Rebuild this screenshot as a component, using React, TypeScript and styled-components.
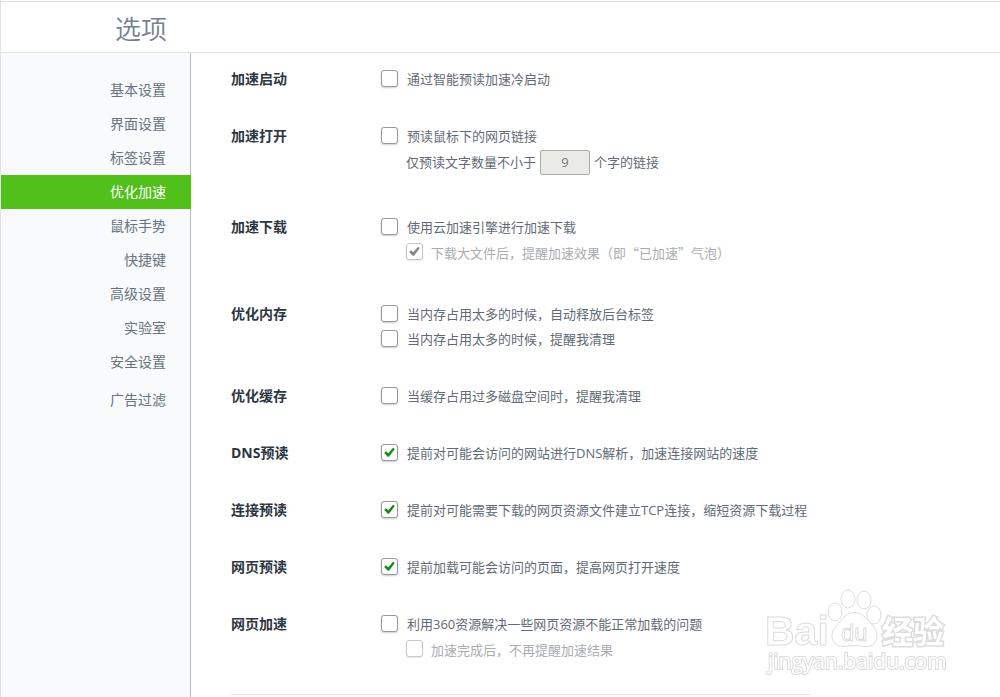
import React from "react";
import styled, { createGlobalStyle, css } from "styled-components";

const GlobalStyle = createGlobalStyle`
  *, *::before, *::after { box-sizing: border-box; }
  body {
    margin: 0;
    background: #fff;
    color: #5f6b76;
    font: 13px/25px "Open Sans", "Noto Sans CJK SC", sans-serif;
  }
`;

const Page = styled.div`
  display: flex;
  flex-direction: column;
  min-height: 100vh;
  padding-top: 1px;
  border-left: 1px solid #e0e3e6;
`;

const Header = styled.header`
  height: 52px;
  padding-left: 114px;
  border-top: 1px solid #dcdfe2;
  border-bottom: 1px solid #e2e4e7;
`;

const Title = styled.h1`
  margin: 0;
  font-family: "Noto Sans CJK SC", sans-serif;
  font-size: 26px;
  line-height: 52px;
  font-weight: 350;
  color: #74818f;
`;

const Body = styled.div`
  display: flex;
  flex: 1;
`;

const Sidebar = styled.nav`
  flex: 0 0 190px;
  padding-top: 20px;
  background: #f8fafc;
  border-right: 1px solid #b9bdc1;
`;

const NavLink = styled.a<{ $active?: boolean; $apart?: boolean }>`
  display: block;
  margin-right: -1px;
  margin-top: ${(p) => (p.$apart ? 4 : 0)}px;
  padding-right: 25px;
  font-size: 14px;
  line-height: 34px;
  text-align: right;
  text-decoration: none;
  color: ${(p) => (p.$active ? "#fff" : "#67737e")};
  background: ${(p) => (p.$active ? "#52c01a" : "transparent")};
`;

const Main = styled.main`
  flex: 1;
  min-width: 0;
  height: calc(100vh - 53px);
  overflow: hidden;
  padding: 14px 40px 0;
`;

const Section = styled.section<{ $extra?: number }>`
  display: flex;
  padding-bottom: ${(p) => 32 + (p.$extra ?? 0)}px;
`;

const SectionTitle = styled.h2`
  flex: 0 0 150px;
  margin: 0;
  font-size: 14px;
  line-height: 24px;
  font-weight: 700;
  color: #2c3742;
`;

const Options = styled.div`
  flex: 1;
  min-width: 0;
`;

const Option = styled.label<{ $sub?: boolean; $muted?: boolean }>`
  display: flex;
  align-items: center;
  gap: ${(p) => (p.$sub ? 8 : 9)}px;
  height: 25px;
  padding-left: ${(p) => (p.$sub ? 25 : 0)}px;
  white-space: nowrap;
  ${(p) =>
    p.$muted &&
    css`
      color: #a9adb0;
      font-family: "Noto Sans CJK SC", sans-serif;
      line-height: 23px;
    `}
`;

const BoxWrap = styled.span`
  display: grid;
  flex: none;
  margin-bottom: 2px;
  > * {
    grid-area: 1 / 1;
  }
`;

const Box = styled.input`
  appearance: none;
  width: 17px;
  height: 17px;
  margin: 0;
  border: 1px solid #979a9d;
  border-radius: 3px;
  background: #fff;
  box-shadow: 0 1px 2px rgba(0, 0, 0, 0.2);
  &:disabled {
    border-color: #c6c8ca;
    box-shadow: 0 1px 2px rgba(0, 0, 0, 0.1);
  }
`;

const Tick = styled.svg`
  width: 17px;
  height: 17px;
  pointer-events: none;
`;

const CountRow = styled.div`
  display: flex;
  align-items: center;
  gap: 4px;
  height: 27px;
  padding-left: 25px;
  white-space: nowrap;
`;

const CountInput = styled.input`
  width: 50px;
  height: 25px;
  padding: 0;
  border: 1px solid #aaaca8;
  border-radius: 2px;
  background: #ebebe6;
  color: #73797d;
  font: inherit;
  text-align: center;
`;

const Divider = styled.hr`
  width: 580px;
  max-width: 100%;
  margin: 0;
  border: 0;
  border-top: 1px solid #e4e5e6;
`;

const Watermark = styled.svg`
  position: fixed;
  right: 50px;
  bottom: 18px;
  width: 190px;
  height: 94px;
  pointer-events: none;
  font-family: "Liberation Sans", "Noto Sans CJK SC", sans-serif;
`;

type CheckProps = {
  children: React.ReactNode;
  checked?: boolean;
  disabled?: boolean;
  sub?: boolean;
};

function Check({ children, checked, disabled, sub }: CheckProps) {
  const [on, setOn] = React.useState(!!checked);
  return (
    <Option $sub={sub} $muted={disabled}>
      <BoxWrap>
        <Box
          type="checkbox"
          checked={on}
          disabled={disabled}
          onChange={(e) => setOn(e.target.checked)}
        />
        {on && (
          <Tick viewBox="0 0 17 17" aria-hidden="true">
            <path
              d="M3.2 8.9 5 7.2l2.3 2.1L12 3.8l1.8 1.3-5.8 7.7h-1.2z"
              fill={disabled ? "#858585" : "#188a18"}
            />
          </Tick>
        )}
      </BoxWrap>
      <span>{children}</span>
    </Option>
  );
}

type GroupProps = { title: string; extra?: number; children: React.ReactNode };

function Group({ title, extra, children }: GroupProps) {
  return (
    <Section $extra={extra}>
      <SectionTitle>{title}</SectionTitle>
      <Options>{children}</Options>
    </Section>
  );
}

const navItems = [
  "基本设置",
  "界面设置",
  "标签设置",
  "优化加速",
  "鼠标手势",
  "快捷键",
  "高级设置",
  "实验室",
  "安全设置",
  "广告过滤",
];

export default function App() {
  return (
    <>
      <GlobalStyle />
      <Page lang="zh-CN">
        <Header>
          <Title>选项</Title>
        </Header>
        <Body>
          <Sidebar>
            {navItems.map((name) => (
              <NavLink
                key={name}
                href="#"
                $active={name === "优化加速"}
                $apart={name === "广告过滤"}
              >
                {name}
              </NavLink>
            ))}
          </Sidebar>
          <Main>
            <Group title="加速启动">
              <Check>通过智能预读加速冷启动</Check>
            </Group>
            <Group title="加速打开" extra={7}>
              <Check>预读鼠标下的网页链接</Check>
              <CountRow>
                <label htmlFor="count">仅预读文字数量不小于</label>
                <CountInput id="count" type="text" defaultValue="9" disabled />
                <span>个字的链接</span>
              </CountRow>
            </Group>
            <Group title="加速下载" extra={5}>
              <Check>使用云加速引擎进行加速下载</Check>
              <Check sub checked disabled>
                下载大文件后，提醒加速效果（即“已加速”气泡）
              </Check>
            </Group>
            <Group title="优化内存">
              <Check>当内存占用太多的时候，自动释放后台标签</Check>
              <Check>当内存占用太多的时候，提醒我清理</Check>
            </Group>
            <Group title="优化缓存">
              <Check>当缓存占用过多磁盘空间时，提醒我清理</Check>
            </Group>
            <Group title="DNS预读">
              <Check checked>提前对可能会访问的网站进行DNS解析，加速连接网站的速度</Check>
            </Group>
            <Group title="连接预读">
              <Check checked>提前对可能需要下载的网页资源文件建立TCP连接，缩短资源下载过程</Check>
            </Group>
            <Group title="网页预读">
              <Check checked>提前加载可能会访问的页面，提高网页打开速度</Check>
            </Group>
            <Group title="网页加速">
              <Check>利用360资源解决一些网页资源不能正常加载的问题</Check>
              <Check sub disabled>
                加速完成后，不再提醒加速结果
              </Check>
            </Group>
            <Divider />
          </Main>
        </Body>
      </Page>
      <Watermark viewBox="0 0 190 94">
        <g fill="#fff" stroke="#dcdcdc" strokeWidth="1">
          <ellipse cx="75" cy="27" rx="7" ry="9" />
          <ellipse cx="88" cy="14" rx="7" ry="9" />
          <ellipse cx="104" cy="15" rx="7" ry="9" />
          <ellipse cx="114" cy="30" rx="7" ry="9" />
          <path d="M94 27.500c-7 0-10 5-14 9-5 5-8 9-8 14 0 7 5 11 11 11 5 0 8-1 12-1s7 1 12 1c6 0 10-4 10-11 0-6-3-9-8-14-5-5-8-9-15-9z" />
          <text x="5" y="60" fontSize="41" fontWeight="700" strokeWidth="1">Bai</text>
          <text x="81" y="56" fontSize="24" strokeWidth="1">du</text>
          <text x="122" y="58" fontSize="31" fontWeight="700" paintOrder="stroke" strokeWidth="3">经验</text>
          <text x="8" y="84" fontSize="21" paintOrder="stroke" strokeWidth="2" fontFamily="Open Sans">jingyan.baidu.com</text>
        </g>
      </Watermark>
    </>
  );
}
